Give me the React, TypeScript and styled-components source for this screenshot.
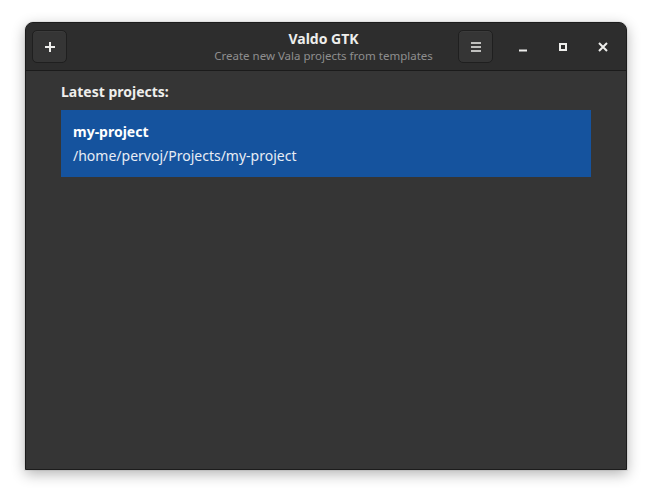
import styled, { createGlobalStyle } from "styled-components";

const Global = createGlobalStyle`
  html, body {
    margin: 0;
    padding: 0;
    background: #ffffff;
  }
  body {
    font-family: "Noto Sans", "Open Sans", sans-serif;
  }
`;

const Page = styled.div`
  width: 652px;
  height: 499px;
  box-sizing: border-box;
  padding: 22px 25px 29px 25px;
  display: flex;
`;

const Window = styled.div`
  flex: 1;
  display: flex;
  flex-direction: column;
  background: #353535;
  border: 1px solid #1c1c1c;
  border-radius: 8px 8px 0 0;
  overflow: hidden;
  box-shadow: 0 4px 14px rgba(0, 0, 0, 0.3), 0 0 0 1px rgba(0, 0, 0, 0.05);
`;

const HeaderBar = styled.header`
  height: 47px;
  flex-shrink: 0;
  display: grid;
  grid-template-columns: minmax(0, 1fr) auto minmax(0, 1fr);
  align-items: center;
  padding: 0 11px 0 6px;
  background: #2d2d2d;
  border-bottom: 1px solid #1b1b1b;
`;

const Side = styled.div<{ $end?: boolean }>`
  display: flex;
  align-items: center;
  justify-content: ${(p) => (p.$end ? "flex-end" : "flex-start")};
`;

const HeaderButton = styled.button`
  width: 35px;
  height: 33px;
  display: flex;
  align-items: center;
  justify-content: center;
  padding: 0;
  background: #353535;
  border: 1px solid #1f1f1f;
  border-radius: 5px;
  color: #eeeeec;
  box-shadow: inset 0 1px rgba(255, 255, 255, 0.03);
`;

const Controls = styled.div`
  display: flex;
  align-items: center;
  gap: 16px;
  margin-left: 18px;
`;

const WindowControl = styled.button`
  width: 24px;
  height: 24px;
  display: flex;
  align-items: center;
  justify-content: center;
  padding: 0;
  background: transparent;
  border: none;
  color: #eeeeec;
`;

const TitleBox = styled.div`
  display: flex;
  flex-direction: column;
  align-items: center;
  padding: 0 12px;
`;

const Title = styled.div`
  font-size: 14px;
  font-weight: 700;
  color: #eeeeec;
  line-height: 18px;
`;

const Subtitle = styled.div`
  font-size: 11.5px;
  color: #8f8f8f;
  line-height: 16px;
`;

const Content = styled.main`
  flex: 1;
  display: flex;
  flex-direction: column;
  padding: 10px 35px 0 35px;
`;

const Heading = styled.div`
  font-size: 14px;
  font-weight: 700;
  color: #eeeeec;
  line-height: 22px;
  margin-bottom: 7px;
`;

const ProjectRow = styled.div`
  display: flex;
  flex-direction: column;
  gap: 2px;
  padding: 11px 12px 10px 12px;
  background: #15539e;
  color: #ffffff;
`;

const ProjectName = styled.div`
  font-size: 14px;
  font-weight: 700;
  line-height: 22px;
`;

const ProjectPath = styled.div`
  font-size: 14px;
  line-height: 22px;
  color: #e8edf5;
`;

function App() {
  return (
    <>
      <Global />
      <Page>
        <Window>
          <HeaderBar>
            <Side>
              <HeaderButton>
                <svg width="12" height="12" viewBox="0 0 12 12">
                  <path d="M6 1v10M1 6h10" stroke="currentColor" strokeWidth="2" />
                </svg>
              </HeaderButton>
            </Side>
            <TitleBox>
              <Title>Valdo GTK</Title>
              <Subtitle>Create new Vala projects from templates</Subtitle>
            </TitleBox>
            <Side $end>
              <HeaderButton>
                <svg width="10" height="10" viewBox="0 0 10 10">
                  <path d="M0 1h10M0 5h10M0 9h10" stroke="currentColor" strokeWidth="1.6" />
                </svg>
              </HeaderButton>
              <Controls>
                <WindowControl>
                  <svg width="10" height="10" viewBox="0 0 10 10">
                    <path d="M1 8.5h8" stroke="currentColor" strokeWidth="2" />
                  </svg>
                </WindowControl>
                <WindowControl>
                  <svg width="10" height="10" viewBox="0 0 10 10">
                    <rect x="2" y="2" width="6" height="6" fill="none" stroke="currentColor" strokeWidth="2" />
                  </svg>
                </WindowControl>
                <WindowControl>
                  <svg width="10" height="10" viewBox="0 0 10 10">
                    <path d="M1 1l8 8M9 1l-8 8" stroke="currentColor" strokeWidth="2" />
                  </svg>
                </WindowControl>
              </Controls>
            </Side>
          </HeaderBar>
          <Content>
            <Heading>Latest projects:</Heading>
            <ProjectRow>
              <ProjectName>my-project</ProjectName>
              <ProjectPath>/home/pervoj/Projects/my-project</ProjectPath>
            </ProjectRow>
          </Content>
        </Window>
      </Page>
    </>
  );
}

export default App;
